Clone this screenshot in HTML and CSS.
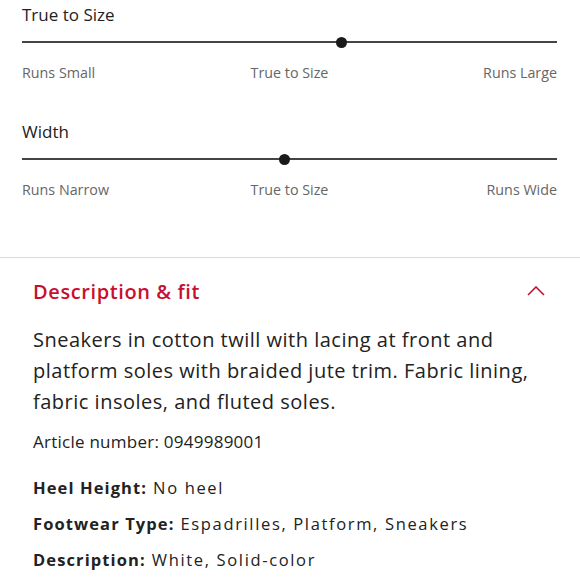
FILE: index.html
```html
<!DOCTYPE html>
<html lang="en">
<head>
<meta charset="utf-8">
<link rel="stylesheet" href="styles.css">
</head>
<body>
<div class="page">
  <section class="fit">
    <div class="scale">
      <div class="scale-title">True to Size</div>
      <div class="track"><span class="dot" style="left: 59.8%"></span></div>
      <div class="scale-labels"><span>Runs Small</span><span>True to Size</span><span class="end">Runs Large</span></div>
    </div>
    <div class="scale">
      <div class="scale-title">Width</div>
      <div class="track"><span class="dot" style="left: 49%"></span></div>
      <div class="scale-labels"><span>Runs Narrow</span><span>True to Size</span><span class="end">Runs Wide</span></div>
    </div>
  </section>
  <section class="desc">
    <div class="desc-head">
      <h2 class="desc-title">Description &amp; fit</h2>
      <svg class="chev" width="18" height="10" viewBox="0 0 18 10"><path d="M1 9 L9 1 L17 9" fill="none" stroke="#c8102e" stroke-width="1.6"/></svg>
    </div>
    <p class="desc-text">Sneakers in cotton twill with lacing at front and platform soles with braided jute trim. Fabric lining, fabric insoles, and fluted soles.</p>
    <p class="article">Article number: 0949989001</p>
    <dl class="attrs">
      <div class="attr"><dt>Heel Height:</dt><dd>No heel</dd></div>
      <div class="attr"><dt>Footwear Type:</dt><dd>Espadrilles, Platform, Sneakers</dd></div>
      <div class="attr"><dt>Description:</dt><dd>White, Solid-color</dd></div>
    </dl>
  </section>
</div>
</body>
</html>
```
FILE: styles.css
```css
* { box-sizing: border-box; }
html, body { margin: 0; padding: 0; background: #fff; }
body {
  font-family: "Open Sans", "Noto Sans", sans-serif;
  color: #222;
  width: 580px;
  height: 580px;
  overflow: hidden;
}
.fit {
  padding: 4px 23px 0 22px;
  height: 258px;
  border-bottom: 1px solid #d9d9d9;
}
.scale { margin-bottom: 39px; }
.scale-title {
  font-size: 17px;
  line-height: 22px;
  color: #222;
}
.track {
  position: relative;
  height: 2px;
  background: #444;
  margin-top: 15px;
}
.dot {
  position: absolute;
  top: 50%;
  width: 11px;
  height: 11px;
  margin: -5.5px 0 0 -5.5px;
  border-radius: 50%;
  background: #1a1a1a;
}
.scale-labels {
  display: grid;
  grid-template-columns: 1fr auto 1fr;
  margin-top: 21px;
  font-size: 14.3px;
  line-height: 18px;
  color: #666;
  white-space: nowrap;
}
.scale-labels .end { justify-self: end; }
.desc { padding: 0 33px; }
.desc-head {
  display: flex;
  justify-content: space-between;
  align-items: center;
  height: 66px;
  padding-right: 2px;
}
.desc-title {
  margin: 0;
  font-size: 20px;
  font-weight: 600;
  letter-spacing: 0.6px;
  color: #c8102e;
}
.chev { display: block; }
.desc-text {
  margin: 0;
  font-size: 20px;
  line-height: 31px;
  letter-spacing: 0.5px;
  color: #222;
}
.article {
  margin: 14px 0 0;
  font-size: 17px;
  line-height: 22px;
  letter-spacing: 0.25px;
}
.attrs { margin: 24px 0 0; }
.attr {
  display: flex;
  gap: 6px;
  font-size: 16.5px;
  line-height: 22px;
  margin-bottom: 14px;
}
.attr dt { font-weight: 700; letter-spacing: 1.1px; }
.attr dd { margin: 0; letter-spacing: 1.65px; }
```
